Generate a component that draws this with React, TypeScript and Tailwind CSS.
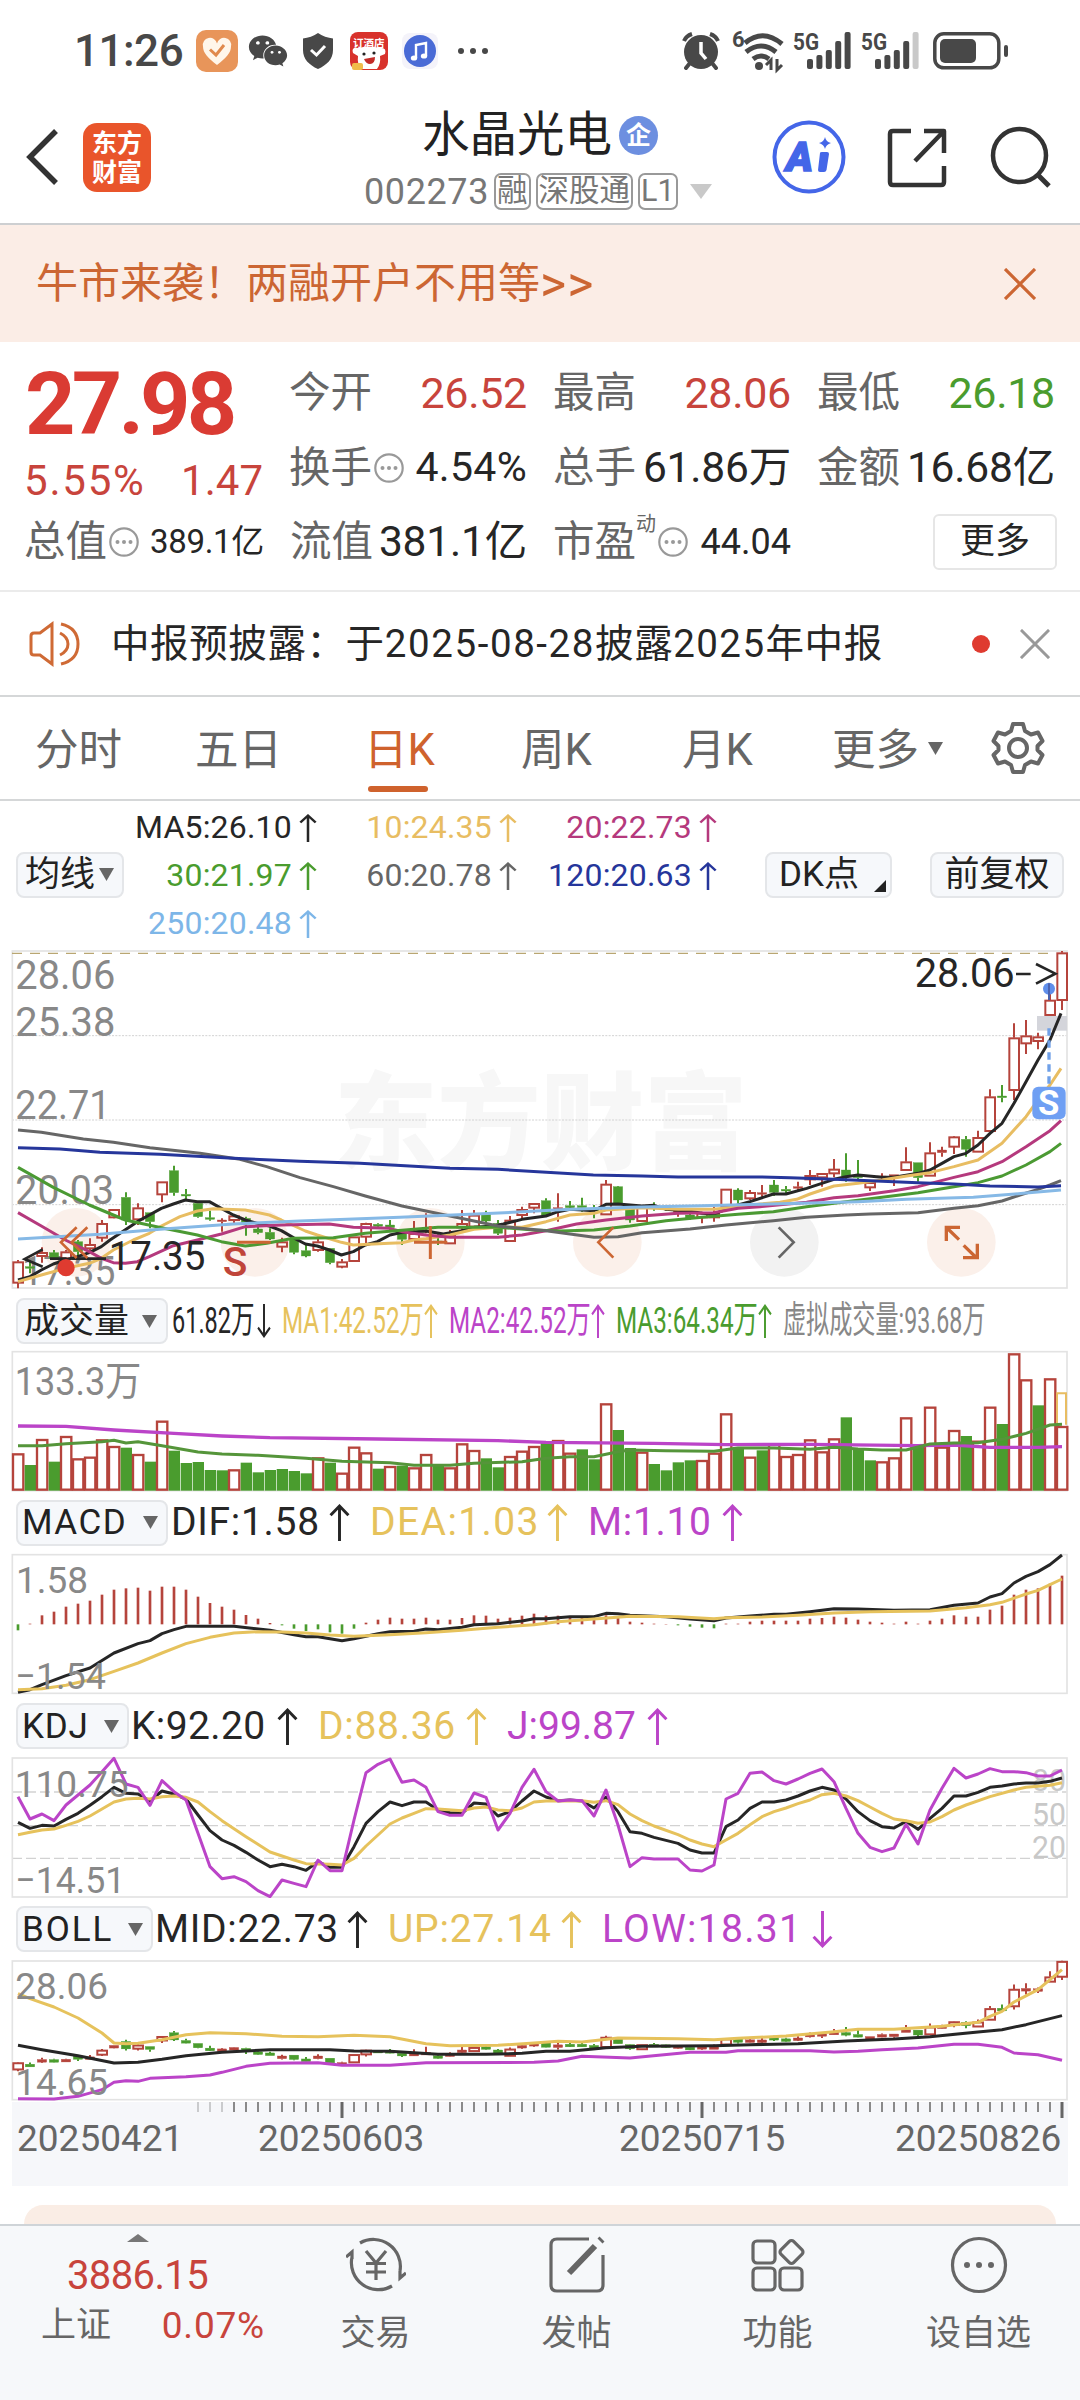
import React from "react";
import { FaWeixin } from "react-icons/fa";

type Pt = [number, number];

const RED = "#b5443c";
const GREEN = "#4a9c2e";
const DARK = "#262626";
const YELLOW = "#e6c25c";
const PURPLE = "#bb44c8";

// Charts are drawn on a 3240-unit wide canvas, one candle every 36 units
const STEP = 36;
const X0 = 54;
const cx = (i: number) => X0 + i * STEP;

const toPath = (pts: Pt[]) => pts.map((p) => p.join(",")).join(" ");
const byIndex = (pts: Pt[]) => pts.map(([i, y]) => `${cx(i)},${y}`).join(" ");

// [direction, body top, body bottom, high, low]
type Candle = ["r" | "g", number, number, number, number];
const candles: Candle[] = [
  ["r", 965, 1028, 960, 1045], ["g", 980, 984, 965, 1000], ["r", 937, 948, 922, 968], ["g", 938, 955, 930, 960],
  ["r", 935, 955, 930, 960], ["g", 905, 935, 900, 950], ["r", 913, 925, 895, 940], ["r", 850, 893, 840, 905],
  ["r", 808, 832, 808, 835], ["g", 772, 840, 757, 855], ["r", 803, 838, 790, 855], ["g", 818, 845, 818, 865],
  ["r", 725, 763, 725, 787], ["g", 692, 758, 677, 767], ["g", 763, 767, 747, 778], ["g", 790, 830, 790, 833],
  ["g", 833, 837, 812, 842], ["r", 840, 844, 835, 875], ["r", 827, 840, 825, 850], ["g", 835, 852, 830, 887],
  ["g", 867, 878, 860, 883], ["g", 877, 897, 865, 900], ["r", 905, 920, 893, 937], ["g", 897, 937, 897, 943],
  ["g", 932, 948, 915, 952], ["r", 905, 930, 890, 935], ["g", 925, 968, 925, 973], ["r", 965, 980, 957, 985],
  ["r", 890, 963, 890, 963], ["r", 850, 890, 848, 910], ["g", 853, 859, 850, 867], ["g", 855, 863, 840, 870],
  ["g", 880, 898, 880, 915], ["r", 880, 897, 843, 900], ["r", 871, 875, 820, 880], ["g", 903, 907, 880, 915],
  ["r", 885, 910, 870, 912], ["r", 850, 862, 810, 870], ["r", 825, 860, 810, 862], ["g", 820, 843, 812, 850],
  ["g", 850, 880, 840, 885], ["r", 840, 903, 828, 905], ["r", 808, 825, 800, 838], ["r", 790, 803, 790, 820],
  ["g", 782, 825, 775, 828], ["r", 803, 807, 760, 845], ["g", 797, 803, 783, 810], ["g", 797, 803, 773, 815],
  ["g", 808, 812, 795, 835], ["r", 732, 823, 720, 825], ["g", 740, 793, 738, 795], ["g", 800, 840, 798, 848],
  ["r", 800, 843, 800, 843], ["g", 798, 802, 787, 812], ["g", 803, 807, 800, 812], ["r", 812, 816, 805, 830],
  ["g", 825, 835, 822, 840], ["r", 818, 832, 815, 850], ["r", 820, 832, 800, 845], ["r", 747, 800, 747, 800],
  ["g", 750, 780, 745, 790], ["r", 757, 775, 750, 780], ["r", 758, 762, 735, 770], ["g", 735, 757, 720, 768],
  ["g", 748, 752, 738, 765], ["r", 740, 744, 725, 755], ["r", 706, 718, 690, 735], ["r", 700, 712, 700, 740],
  ["r", 687, 700, 657, 712], ["g", 690, 708, 640, 725], ["g", 708, 712, 660, 720], ["r", 727, 742, 727, 753],
  ["r", 708, 712, 700, 725], ["r", 704, 712, 704, 738], ["r", 665, 690, 622, 690], ["g", 668, 713, 668, 725],
  ["r", 638, 707, 607, 707], ["r", 630, 638, 620, 650], ["r", 590, 620, 588, 642], ["g", 598, 628, 588, 650],
  ["r", 592, 635, 572, 635], ["r", 470, 573, 448, 573], ["g", 468, 472, 435, 487], ["r", 293, 450, 250, 480],
  ["r", 287, 310, 240, 342], ["r", 290, 303, 278, 328], ["r", 180, 225, 130, 225], ["r", 38, 180, 33, 210],
];

const ma5: Pt[] = [[54,1020],[90,1010],[124,990],[160,972],[196,960],[232,950],[268,938],[304,920],[330,900],[375,870],[412,845],[448,825],[484,805],[520,792],[556,780],[592,785],[628,785],[664,805],[700,825],[736,840],[772,850],[808,858],[844,872],[880,893],[916,912],[952,918],[988,930],[1024,945],[1060,935],[1096,915],[1132,905],[1170,885],[1200,878],[1278,873],[1330,882],[1386,872],[1422,862],[1480,858],[1510,852],[1566,838],[1638,828],[1674,815],[1710,808],[1782,812],[1818,793],[1854,792],[1926,798],[1962,796],[1998,808],[2070,814],[2106,820],[2142,822],[2178,808],[2214,795],[2250,785],[2320,762],[2358,762],[2420,745],[2502,718],[2538,710],[2574,705],[2646,712],[2682,712],[2754,700],[2790,690],[2826,670],[2862,650],[2898,640],[2934,615],[2970,580],[3006,550],[3042,490],[3078,425],[3114,360],[3150,300],[3183,220]];
const ma10: Pt[] = [[54,1025],[124,1005],[196,985],[268,970],[304,955],[340,930],[400,900],[448,880],[484,858],[540,830],[592,813],[640,806],[736,810],[808,825],[844,840],[916,873],[952,885],[1024,907],[1060,915],[1168,910],[1206,908],[1242,900],[1278,896],[1350,885],[1422,868],[1494,862],[1566,862],[1638,845],[1710,825],[1782,820],[1818,810],[1926,803],[2034,808],[2142,808],[2214,800],[2280,792],[2340,787],[2390,778],[2430,762],[2502,738],[2574,730],[2646,720],[2720,708],[2790,698],[2862,680],[2934,660],[3006,610],[3078,530],[3114,480],[3150,435],[3183,385]];
const ma20: Pt[] = [[54,818],[124,858],[196,900],[268,935],[304,955],[340,968],[376,970],[412,965],[448,950],[520,917],[592,900],[664,882],[736,860],[844,855],[988,852],[1060,862],[1168,865],[1206,875],[1278,885],[1350,892],[1494,892],[1566,885],[1638,872],[1730,852],[1818,840],[1926,828],[2034,820],[2142,818],[2214,805],[2280,800],[2420,787],[2502,773],[2574,767],[2682,752],[2754,740],[2862,712],[2934,695],[3006,665],[3078,620],[3150,572],[3183,542]];
const ma30: Pt[] = [[54,682],[160,742],[268,795],[376,840],[484,863],[592,885],[664,905],[736,918],[800,910],[880,895],[1000,893],[1096,880],[1206,871],[1314,862],[1494,862],[1602,870],[1680,873],[1782,870],[1890,858],[1998,842],[2106,832],[2214,823],[2320,815],[2420,800],[2538,785],[2646,772],[2754,758],[2862,740],[2934,728],[3006,708],[3078,675],[3150,635],[3183,610]];
const ma60: Pt[] = [[54,570],[124,577],[250,597],[340,607],[450,623],[600,640],[720,658],[800,680],[900,713],[1000,740],[1096,768],[1206,798],[1350,828],[1494,858],[1638,872],[1782,892],[1854,890],[1926,878],[2070,867],[2178,855],[2320,842],[2420,832],[2538,825],[2610,822],[2754,818],[2862,805],[2934,797],[3006,783],[3060,765],[3114,748],[3150,735],[3183,722]];
const ma120: Pt[] = [[54,623],[180,627],[300,637],[480,643],[700,655],[900,664],[1080,670],[1350,685],[1494,688],[1780,705],[1926,708],[2034,711],[2280,711],[2370,713],[2502,718],[2610,722],[2754,728],[2862,732],[2970,738],[3114,741],[3183,737]];
const ma250: Pt[] = [[54,897],[300,883],[480,868],[700,852],[900,843],[1200,832],[1480,820],[1680,809],[1890,802],[2106,797],[2280,793],[2574,785],[2720,778],[2920,772],[3070,760],[3183,750]];

const volumes = [
  "r490","g525","r447","g515","r438","r505","r500","r448","r468","g473","r492","g515","r392","g482","g519","g516",
  "g540","g541","r538","g518","g547","g540","g537","g543","g550","r502","g518","r548","r470","r487","g536","r528",
  "g527","r532","r492","g527","r532","r460","r480","g505","g532","r498","r482","r468","g457","r450","r488","g478",
  "g508","r340","g420","g474","r485","g522","g541","g517","g511","r510","r488","r370","g472","r500","g481","r460",
  "r498","r492","r448","r484","r445","g382","g474","g511","r514","r502","r382","g468","r350","r470","r420","g438",
  "r452","r350","g402","r190","r268","g346","r265","r408",
];
const volSlow: Pt[] = [[0,408],[4,409],[8,420],[13,430],[17,438],[21,443],[30,447],[40,452],[44,457],[53,460],[59,464],[66,463],[75,467],[78,465],[81,472],[85,472],[87,470]];
const volFast: Pt[] = [[0,467],[2,467],[4,461],[7,455],[8,451],[9,459],[10,455],[12,467],[15,486],[17,492],[20,496],[24,505],[27,514],[31,518],[33,526],[36,526],[38,520],[42,515],[44,505],[46,500],[48,500],[50,485],[51,480],[54,482],[58,484],[60,474],[63,474],[66,478],[68,472],[70,477],[72,480],[74,480],[76,462],[78,459],[80,458],[82,448],[84,430],[86,405],[87,403]];

const macdBars = [
  422,402,377,366,351,342,333,315,300,296,294,303,291,291,300,321,340,351,360,376,387,400,407,417,424,419,428,432,417,399,
  390,384,387,387,384,390,390,385,377,378,387,384,378,372,378,378,381,381,390,377,384,396,399,402,403,407,411,414,416,402,
  402,396,393,393,393,393,387,385,381,384,390,396,399,402,396,402,393,387,377,381,381,360,348,315,300,296,282,258,
];
const dif: Pt[] = [[0,608],[1,600],[2,585],[4,558],[6,535],[8,490],[10,462],[11,453],[12,432],[13,420],[14,410],[18,410],[21,422],[23,435],[24,441],[25,441],[27,453],[28,447],[30,432],[31,426],[33,425],[34,418],[35,420],[37,413],[38,405],[40,402],[42,394],[43,387],[44,387],[46,381],[48,381],[49,371],[50,372],[51,377],[54,381],[56,388],[58,393],[59,385],[61,379],[63,374],[64,374],[66,366],[68,357],[70,358],[73,362],[76,360],[78,347],[80,340],[81,322],[82,312],[83,280],[84,260],[85,246],[86,225],[87,196]];
const dea: Pt[] = [[0,600],[2,597],[4,587],[6,570],[8,545],[10,520],[12,490],[14,462],[16,443],[18,430],[20,426],[22,427],[24,430],[26,436],[28,440],[31,435],[34,429],[37,422],[40,413],[43,405],[45,396],[48,388],[51,380],[55,381],[58,387],[59,384],[62,382],[65,377],[68,370],[71,366],[76,364],[79,354],[81,345],[82,338],[84,313],[85,302],[86,285],[87,268]];

const kLine: Pt[] = [[0,367],[1,385],[2,376],[3,378],[4,358],[5,340],[6,316],[7,290],[8,262],[9,280],[10,282],[11,303],[12,273],[13,282],[14,297],[15,345],[16,392],[17,420],[18,436],[19,457],[20,480],[21,500],[22,493],[23,500],[24,511],[25,485],[26,502],[27,502],[28,440],[29,370],[30,335],[31,306],[32,317],[33,306],[34,306],[35,330],[36,338],[37,340],[38,309],[39,312],[40,348],[41,335],[42,303],[43,273],[44,291],[45,302],[46,300],[47,303],[48,324],[49,291],[50,335],[51,395],[52,400],[53,412],[55,430],[56,450],[57,459],[58,459],[59,380],[60,360],[61,325],[62,306],[63,306],[64,300],[65,288],[66,273],[67,262],[68,270],[69,297],[70,335],[71,362],[72,380],[73,384],[74,364],[75,388],[76,355],[77,325],[78,288],[79,288],[80,277],[81,262],[82,258],[83,252],[84,249],[85,249],[86,244],[87,234]];
const dLine: Pt[] = [[0,404],[1,397],[2,390],[3,387],[4,376],[5,364],[6,348],[7,327],[8,306],[9,297],[10,295],[11,297],[12,290],[13,288],[14,292],[15,306],[16,335],[17,362],[19,410],[21,456],[22,468],[23,480],[24,491],[25,492],[26,493],[27,495],[28,475],[29,438],[30,405],[31,372],[32,354],[33,340],[34,326],[35,327],[37,332],[38,324],[39,321],[40,330],[41,332],[42,324],[43,306],[44,303],[47,302],[48,307],[49,302],[50,314],[51,342],[52,362],[53,378],[55,404],[56,420],[57,432],[58,440],[59,420],[60,400],[61,374],[62,350],[63,335],[64,324],[65,311],[66,300],[67,284],[68,280],[69,288],[70,302],[71,321],[72,340],[73,357],[74,362],[75,370],[76,366],[77,350],[78,330],[79,315],[81,290],[83,270],[84,262],[86,256],[87,248]];
const jLine: Pt[] = [[0,290],[1,357],[2,342],[3,362],[4,315],[5,285],[6,255],[7,215],[8,175],[9,252],[10,262],[11,316],[12,242],[13,275],[14,300],[15,400],[16,500],[17,536],[18,530],[19,545],[20,572],[21,590],[22,540],[23,550],[24,560],[25,480],[26,512],[27,512],[28,360],[29,218],[30,193],[31,177],[32,247],[33,240],[34,262],[35,335],[36,346],[37,346],[38,279],[39,292],[40,390],[41,340],[42,262],[43,208],[44,275],[45,303],[46,300],[47,302],[48,348],[49,270],[50,375],[51,500],[52,473],[53,477],[55,477],[56,510],[57,513],[58,495],[59,297],[60,280],[61,220],[62,216],[63,242],[64,252],[65,237],[66,220],[67,207],[68,245],[69,325],[70,400],[71,442],[72,455],[73,444],[74,373],[75,432],[76,330],[77,265],[78,205],[79,234],[80,222],[81,206],[82,215],[83,215],[84,218],[85,228],[86,228],[87,210]];

const bollUp: Pt[] = [[0,282],[1,297],[3,322],[5,355],[7,400],[8,430],[9,432],[10,431],[12,420],[14,405],[16,399],[19,402],[22,410],[25,411],[28,407],[31,411],[34,432],[36,438],[40,437],[43,430],[45,425],[47,427],[50,415],[55,417],[58,420],[60,416],[64,409],[68,396],[70,389],[73,389],[75,384],[77,380],[80,368],[81,350],[82,335],[83,307],[85,270],[86,240],[87,210]];
const bollMid: Pt[] = [[0,437],[2,450],[5,468],[8,490],[10,488],[12,479],[14,468],[17,458],[21,450],[26,450],[28,454],[31,455],[35,464],[39,464],[42,461],[44,455],[46,455],[49,444],[52,440],[58,438],[61,435],[65,432],[69,424],[73,418],[76,411],[80,397],[82,390],[84,375],[87,348]];
const bollLow: Pt[] = [[0,597],[3,598],[5,590],[7,570],[8,548],[9,543],[10,545],[11,536],[14,531],[16,526],[17,518],[19,500],[21,491],[25,489],[27,497],[31,497],[34,489],[43,488],[45,484],[47,470],[51,475],[56,458],[59,458],[60,453],[66,453],[68,457],[70,455],[72,450],[75,445],[78,434],[80,434],[82,443],[83,460],[85,465],[87,482]];

const Line = ({ pts, color, w = 9 }: { pts: string; color: string; w?: number }) => (
  <polyline points={pts} fill="none" stroke={color} strokeWidth={w} strokeLinejoin="round" />
);

const Label = ({ x, y, w, children, size = 122, fill = "#888" }: { x: number; y: number; w: number; children: string; size?: number; fill?: string }) => (
  <text x={x} y={y} fontSize={size} fill={fill} textLength={w} lengthAdjust="spacingAndGlyphs">
    {children}
  </text>
);

const Candles = ({ map = (y: number) => y, minBody = 5 }: { map?: (y: number) => number; minBody?: number }) => (
  <g>
    {candles.map(([dir, top, bottom, high, low], i) => {
      const color = dir === "r" ? RED : GREEN;
      const t = map(top);
      const h = Math.max(map(bottom) - t, minBody);
      const hollow = dir === "r" && h > 9;
      return (
        <g key={i} stroke={color}>
          <path d={`M${cx(i)} ${map(high)}V${t}M${cx(i)} ${t + h}V${map(low)}`} strokeWidth={6} />
          {hollow ? (
            <rect x={cx(i) - 14} y={t + 2} width={29} height={h - 2} fill="#fff" strokeWidth={6} />
          ) : (
            <rect x={cx(i) - 14} y={t} width={28} height={h} fill={color} strokeWidth={1} />
          )}
        </g>
      );
    })}
  </g>
);

const MainChart = () => (
  <svg viewBox="0 24 3240 1032" className="block h-[344px] w-[1080px] font-[Roboto,'Noto_Sans_CJK_SC',sans-serif]">
    <text x={1002} y={664} fontSize={316} fontWeight={900} fill="#f7f7f7" textLength={1240} lengthAdjust="spacingAndGlyphs">
      东方财富
    </text>
    {[287, 540, 794].map((y) => (
      <path key={y} d={`M36 ${y}H3200`} stroke="#d2d2d2" strokeWidth={3} strokeDasharray="6 4" />
    ))}
    <rect x={37} y={33} width={3164} height={1011} fill="none" stroke="#e3e3e3" strokeWidth={5} />
    <path d="M36 40H3150" stroke="#b9a672" strokeWidth={4} strokeDasharray="30 24" />
    {[228, 765, 1291, 1822, 2353, 2884].map((x) => (
      <circle key={x} cx={x} cy={907} r={103} fill={x === 2353 ? "#f2f2f2" : "#fbf0ea"} />
    ))}
    <Label x={46} y={147} w={300}>28.06</Label>
    <Label x={46} y={287} w={300}>25.38</Label>
    <Label x={46} y={538} w={286}>22.71</Label>
    <Label x={46} y={793} w={296}>20.03</Label>
    <Label x={66} y={1034} w={280}>17.35</Label>
    <rect x={3111} y={228} width={90} height={44} fill="#d4d5db" />
    <Candles />
    <Line pts={toPath(ma5)} color={DARK} />
    <Line pts={toPath(ma10)} color="#e8bd62" />
    <Line pts={toPath(ma20)} color="#b5397d" />
    <Line pts={toPath(ma30)} color="#4b9a33" />
    <Line pts={toPath(ma60)} color="#666" />
    <Line pts={toPath(ma120)} color="#26369b" />
    <Line pts={toPath(ma250)} color="#86b9e6" />

    {/* low and high price pointers */}
    <g fill="none" stroke={DARK} strokeWidth={8}>
      <path d="M128 928L74 957L128 980M150 956H200M214 956H318" />
      <path d="M3048 102H3092M3108 72L3166 101L3108 131" />
    </g>
    <Label x={326} y={991} w={290} size={120} fill={DARK}>17.35</Label>
    <Label x={2744} y={140} w={300} size={120} fill={DARK}>28.06</Label>
    <circle cx={198} cy={983} r={26} fill="#df3b30" />

    <circle cx={3147} cy={146} r={18} fill="#5f8eea" />
    <path d="M3147 130V180" stroke="#4a62b0" strokeWidth={6} />
    <path d="M3147 265V435" stroke="#6fa0e8" strokeWidth={10} strokeDasharray="22 14" />
    <rect x={3097} y={440} width={100} height={98} rx={18} fill="#6f9ff3" />
    <text x={3146} y={526} fontSize={104} fontWeight={700} fill="#fff" textAnchor="middle">S</text>

    <g fill="none" stroke="#cc6633" strokeWidth={8}>
      <path d="M230 862L183 907L230 954M262 862L215 907L262 954" />
      <path d="M1242 907H1342M1291 858V957" strokeWidth={9} />
      <path d="M1840 862L1795 907L1840 953" />
      <path d="M2839 903V862H2880M2841 864L2877 899M2891 916L2930 954M2932 911V953H2889" strokeWidth={10} />
      <path d="M711 907H812" strokeWidth={9} />
    </g>
    <path d="M2336 862L2381 907L2336 953" fill="none" stroke="#666" strokeWidth={8} />
    <text x={668} y={1008} fontSize={122} fontWeight={500} fill="#c0453a">S</text>
  </svg>
);

const Frame = ({ y, h }: { y: number; h: number }) => (
  <rect x={37} y={y} width={3164} height={h} fill="none" stroke="#e3e3e3" strokeWidth={5} />
);

const VolumeChart = () => (
  <svg viewBox="0 180 3240 426" className="block h-[142px] w-[1080px] font-[Roboto,'Noto_Sans_CJK_SC',sans-serif]">
    <Frame y={185} h={417} />
    <Label x={44} y={315} w={380} size={118}>133.3万</Label>
    {volumes.map((v, i) => {
      const top = Number(v.slice(1));
      return v[0] === "r" ? (
        <rect key={i} x={cx(i) - 15} y={top + 3} width={31} height={596 - top} fill="#fff" stroke={RED} strokeWidth={7} />
      ) : (
        <rect key={i} x={cx(i) - 16} y={top} width={34} height={602 - top} fill={GREEN} />
      );
    })}
    <path d="M3171 404V310H3198V404" fill="#fff" stroke="#e8bd62" strokeWidth={6} />
    <Line pts={byIndex(volSlow)} color={PURPLE} w={10} />
    <Line pts={byIndex(volFast)} color="#55953a" />
  </svg>
);

const MacdChart = () => (
  <svg viewBox="0 190 3240 426" className="block h-[142px] w-[1080px] font-[Roboto,sans-serif]">
    <Frame y={195} h={416} />
    {macdBars.map((v, i) => (
      <path key={i} d={`M${cx(i)} 404V${v}`} stroke={v > 404 ? GREEN : RED} strokeWidth={8} />
    ))}
    <Line pts={byIndex(dif)} color={DARK} />
    <Line pts={byIndex(dea)} color={YELLOW} />
    <Label x={48} y={310} w={216} size={112}>1.58</Label>
    <Label x={46} y={599} w={272} size={112}>−1.54</Label>
  </svg>
);

const KdjChart = () => (
  <svg viewBox="0 168 3240 426" className="block h-[142px] w-[1080px] font-[Roboto,sans-serif]">
    {[276, 377, 475].map((y) => (
      <path key={y} d={`M36 ${y}H3200`} stroke="#d2d2d2" strokeWidth={4} strokeDasharray="30 12" />
    ))}
    <Frame y={174} h={417} />
    <Label x={3096} y={273} w={102} size={92} fill="#c8c8c8">80</Label>
    <Label x={3096} y={375} w={102} size={92} fill="#c8c8c8">50</Label>
    <Label x={3096} y={475} w={102} size={92} fill="#c8c8c8">20</Label>
    <Line pts={byIndex(kLine)} color={DARK} />
    <Line pts={byIndex(dLine)} color={YELLOW} />
    <Line pts={byIndex(jLine)} color={PURPLE} />
    <Label x={44} y={290} w={342} size={112}>110.75</Label>
    <Label x={46} y={578} w={330} size={112}>−14.51</Label>
  </svg>
);

const BollChart = () => (
  <svg viewBox="0 178 3240 426" className="block h-[142px] w-[1080px] font-[Roboto,sans-serif]">
    <Frame y={184} h={416} />
    <Candles map={(y) => 183 + (y - 33) * 0.328} minBody={8} />
    <Line pts={byIndex(bollUp)} color={YELLOW} />
    <Line pts={byIndex(bollMid)} color={DARK} />
    <Line pts={byIndex(bollLow)} color={PURPLE} />
    <Label x={46} y={299} w={278} size={112}>28.06</Label>
    <Label x={46} y={586} w={278} size={112}>14.65</Label>
  </svg>
);

const Arrow = ({ down, className = "" }: { down?: boolean; className?: string }) => (
  <svg viewBox="0 0 20 36" preserveAspectRatio="none" className={`shrink-0 ${down ? "rotate-180" : ""} ${className}`}>
    <path d="M10 36V2M1.5 11L10 2L18.5 11" fill="none" stroke="currentColor" strokeWidth="2.8" />
  </svg>
);

const Caret = ({ className = "" }: { className?: string }) => (
  <svg viewBox="0 0 15 13" className={`h-[13px] w-[15px] shrink-0 ${className}`}>
    <path d="M0 0H15L7.5 13Z" fill="currentColor" />
  </svg>
);

const Info = () => (
  <svg viewBox="0 0 30 30" className="ml-[2px] h-[30px] w-[30px] shrink-0 text-[#999]">
    <circle cx="15" cy="15" r="13.7" fill="none" stroke="currentColor" strokeWidth="2.2" />
    {[8.5, 15, 21.5].map((x) => (
      <circle key={x} cx={x} cy="15" r="2" fill="currentColor" />
    ))}
  </svg>
);

const Chip = ({ children, className = "" }: { children: React.ReactNode; className?: string }) => (
  <div className={`flex h-[46px] shrink-0 items-center rounded-lg border-2 border-[#e4e6e9] bg-[#f6f8fb] text-[35px] leading-none text-[#222] ${className}`}>
    {children}
  </div>
);

const Bars = ({ last = "#484848" }: { last?: string }) => (
  <svg viewBox="0 0 60 40" className="h-10 w-[60px] overflow-visible">
    <text x="0" y="19" fontSize="24" fontWeight="700" fill="#484848" textLength="26" lengthAdjust="spacingAndGlyphs">5G</text>
    {[28, 24, 19, 10, 1].map((y, i) => (
      <rect key={y} x={14 + i * 9.4} y={y} width="6" height={38 - y} rx="2" fill={i === 4 ? last : "#484848"} />
    ))}
  </svg>
);

const StatusBar = () => (
  <div className="flex h-[102px] items-center pl-[74px] text-[#484848]">
    <span className="w-[122px] text-[44px] leading-none font-medium tracking-[-0.5px]">11:26</span>
    <svg viewBox="0 0 42 42" className="h-[42px] w-[42px]">
      <rect width="42" height="42" rx="10" fill="#e8955a" />
      <path d="M21 35C12 28 7 23 7 16.500a7 7 0 0 1 14-3a7 7 0 0 1 14 3C35 23 30 28 21 35Z" fill="#fff6ea" />
      <path d="M14 19.500L20 25L28 15" fill="none" stroke="#e0894c" strokeWidth="3" />
    </svg>
    <FaWeixin className="ml-[10px] h-[40px] w-[40px]" />
    <svg viewBox="0 0 32 36" className="ml-[14px] h-9 w-8">
      <path d="M16 0C20 3 26 5 31 5.500V17C31 26 25 32 16 36C7 32 1 26 1 17V5.500C6 5 12 3 16 0Z" fill="currentColor" />
      <path d="M9 17L14.500 22L23 13" fill="none" stroke="#fff" strokeWidth="3" />
    </svg>
    <svg viewBox="0 0 38 38" className="ml-[16px] h-[38px] w-[38px]">
      <rect width="38" height="38" rx="8" fill="#d8322c" />
      <text x="3" y="15" fontSize="10.500" fontWeight="700" fill="#fff">订酒店</text>
      <path d="M3 21Q1 15 8 16Q19 13 30 16Q37 15 35 22L30 24Q31 32 27 37H11Q7 32 8 24Z" fill="#fff" />
      <circle cx="14" cy="22" r="1.600" fill="#222" />
      <circle cx="24" cy="21" r="1.600" fill="#222" />
      <path d="M14 27L25 25Q25 32 20 32Q16 32 14 27Z" fill="#c32b28" />
      <rect x="2" y="31" width="11" height="7" rx="2" fill="#f0bc4a" />
    </svg>
    <svg viewBox="0 0 36 36" className="ml-[14px] h-9 w-9">
      <rect width="36" height="36" rx="8" fill="#f4f3fa" />
      <circle cx="18" cy="18" r="16" fill="#4a6bd6" />
      <path d="M14 25V12L24 10V23" fill="none" stroke="#fff" strokeWidth="2.400" />
      <ellipse cx="12" cy="25" rx="3.200" ry="2.600" fill="#fff" />
      <ellipse cx="22" cy="23" rx="3.200" ry="2.600" fill="#fff" />
    </svg>
    <div className="ml-[20px] flex gap-[6px]">
      <i className="h-[6px] w-[6px] rounded-full bg-[#484848]" />
      <i className="h-[6px] w-[6px] rounded-full bg-[#484848]" />
      <i className="h-[6px] w-[6px] rounded-full bg-[#484848]" />
    </div>

    <svg viewBox="0 0 38 38" className="ml-auto h-[38px] w-[38px]">
      <path d="M8 31L4 36M30 31L34 36" stroke="currentColor" strokeWidth="4" strokeLinecap="round" />
      <circle cx="19" cy="20" r="17" fill="currentColor" />
      <path d="M2 9Q4 4 10 2M36 9Q34 4 28 2" fill="none" stroke="currentColor" strokeWidth="4" />
      <path d="M19 10V21L24 27" fill="none" stroke="#fff" strokeWidth="3.500" />
    </svg>
    <svg viewBox="0 0 54 42" className="ml-[12px] h-[42px] w-[54px] overflow-visible">
      <text x="0" y="17" fontSize="22" fontWeight="700" fill="currentColor">6</text>
      <path d="M13 13Q31 -2 50 14M14 22Q29 10 44 22M21 29Q29 23 37 29" fill="none" stroke="currentColor" strokeWidth="5" />
      <circle cx="27" cy="36" r="4" fill="currentColor" />
      <path d="M39 40V30L34 35M45 29V40L50 35" fill="none" stroke="currentColor" strokeWidth="3" />
    </svg>
    <div className="ml-[7px]"><Bars /></div>
    <div className="ml-[8px]"><Bars last="#c9c9c9" /></div>
    <svg viewBox="0 0 76 38" className="mr-[71px] ml-[12px] h-[38px] w-[76px]">
      <rect x="1.800" y="1.800" width="64" height="34" rx="9" fill="none" stroke="currentColor" strokeWidth="3.500" />
      <rect x="7" y="7" width="36" height="24" rx="5" fill="currentColor" />
      <rect x="71" y="13" width="4" height="12" rx="2" fill="currentColor" />
    </svg>
  </div>
);

const Tag = ({ children }: { children: string }) => (
  <span className="flex h-[37px] shrink-0 items-center rounded-[7px] border-2 border-[#999] px-[1px] text-[30.500px] leading-none whitespace-nowrap text-[#777]">{children}</span>
);

const Header = () => (
  <div className="flex h-[123px] border-b-2 border-[#cdcfd1]">
    <div className="flex w-[364px] items-start pl-[26px]">
      <svg viewBox="0 0 34 58" className="mt-[26px] h-[58px] w-[34px]">
        <path d="M30 3L4 29L30 55" fill="none" stroke="#333" strokeWidth="5.500" />
      </svg>
      <div className="mt-[21px] ml-[23px] flex h-[69px] w-[68px] flex-col items-center justify-center rounded-[14px] bg-[#e9552b] text-[25px] leading-[29px] font-bold text-white">
        <span>东方</span>
        <span>财富</span>
      </div>
    </div>
    <div className="flex w-[350px] flex-col items-center">
      <div className="flex h-[67px] items-center gap-[7px] pl-[2px] text-[47.500px] leading-none text-[#222]">
        水晶光电
        <span className="flex h-[39px] w-[39px] items-center justify-center rounded-full bg-[#6d8fe0] text-[25px] font-bold text-white">企</span>
      </div>
      <div className="mt-[4px] flex h-[37px] w-full items-center gap-[5px]">
        <span className="text-[36px] leading-none tracking-[0.600px] text-[#777]">002273</span>
        <Tag>融</Tag>
        <Tag>深股通</Tag>
        <Tag>L1</Tag>
        <svg viewBox="0 0 22 15" className="ml-[7px] h-[15px] w-[22px]">
          <path d="M0 0H22L11 15Z" fill="#c9c9c9" />
        </svg>
      </div>
    </div>
    <svg viewBox="0 0 74 74" className="mt-[18px] ml-[58px] h-[74px] w-[74px]">
      <circle cx="37" cy="37" r="34.500" fill="none" stroke="#4466e8" strokeWidth="4" />
      <text x="14" y="51" fontSize="41" fontWeight="900" fontStyle="italic" fill="#4466e8" stroke="#4466e8" strokeWidth="1.500">A</text>
      <path d="M48 33Q48 32 50 32H55Q57 32 57 34L54.500 50Q54 52 52 52H48Q46 52 46 50Z" fill="#4466e8" />
      <path d="M53 17Q54 22 59 23Q54 24.500 53 29Q52 24.500 47 23Q52 22 53 17Z" fill="#4466e8" />
    </svg>
    <svg viewBox="0 0 60 60" className="mt-[26px] ml-[41px] h-[60px] w-[60px]">
      <path d="M24 3H6Q3 3 3 6V54Q3 57 6 57H54Q57 57 57 54V38M37 3H57V25M57 3L28 33" fill="none" stroke="#333" strokeWidth="4.500" strokeLinejoin="round" />
    </svg>
    <svg viewBox="0 0 62 62" className="mt-[24px] ml-[43px] h-[62px] w-[62px]">
      <circle cx="29.500" cy="29.500" r="26.500" fill="none" stroke="#333" strokeWidth="4.500" />
      <path d="M48 49L59 60" stroke="#333" strokeWidth="5" />
    </svg>
  </div>
);

const Close = ({ color, className = "" }: { color: string; className?: string }) => (
  <svg viewBox="0 0 32 32" className={className}>
    <path d="M1 1L31 31M31 1L1 31" stroke={color} strokeWidth="3.200" />
  </svg>
);

const Quote = () => (
  <div className="h-[250px] border-b-2 border-[#ebebeb] pl-[24px]">
    <div className="flex h-[143px]">
      <div className="w-[265px] pt-[18px]">
        <div className="pl-px text-[88px] leading-[88px] font-bold tracking-[-3.800px] text-[#da3b33]">27.98</div>
        <div className="mt-[8px] flex w-[239px] justify-between text-[42px] leading-[50px] text-[#c8443c]">
          <span className="tracking-[1.800px]">5.55%</span>
          <span>1.47</span>
        </div>
      </div>
      <div className="grid grid-cols-[238px_238px_238px] content-start gap-x-[26px] gap-y-[15px] pt-[21px] text-[41.500px] text-[#666]">
        <div className="flex h-[60px] items-center justify-between">今开<b className="text-[43px] font-normal tracking-[-0.300px] text-[#c8443c]">26.52</b></div>
        <div className="flex h-[60px] items-center justify-between">最高<b className="text-[43px] font-normal tracking-[-0.300px] text-[#c8443c]">28.06</b></div>
        <div className="flex h-[60px] items-center justify-between">最低<b className="text-[43px] font-normal tracking-[-0.300px] text-[#4a9c2e]">26.18</b></div>
        <div className="flex h-[60px] items-center">换手<Info /><b className="ml-auto text-[41px] font-normal tracking-[0.300px] text-[#262626]">4.54%</b></div>
        <div className="flex h-[60px] items-center justify-between">总手<b className="text-[42.500px] font-normal tracking-[-0.200px] text-[#262626]">61.86万</b></div>
        <div className="flex h-[60px] items-center justify-between">金额<b className="text-[42.500px] font-normal tracking-[-0.200px] text-[#262626]">16.68亿</b></div>
      </div>
    </div>
    <div className="mt-[27px] flex h-[60px] items-center text-[41.500px] text-[#666]">
      <div className="mr-[26px] flex w-[240px] items-center">总值<Info /><b className="ml-auto text-[33px] font-normal tracking-[-0.300px] text-[#262626]">389.1亿</b></div>
      <div className="mr-[26px] flex w-[237px] items-center justify-between">流值<b className="text-[42.500px] font-normal tracking-[-0.200px] text-[#262626]">381.1亿</b></div>
      <div className="flex w-[238px] items-center">市盈<span className="mb-[36px] text-[20px] leading-none">动</span><Info /><b className="ml-auto text-[36px] font-normal text-[#262626]">44.04</b></div>
      <div className="ml-[142px] flex h-[56px] w-[124px] items-center justify-center rounded-md border-2 border-[#e6e6e6] text-[35px] text-[#262626]">更多</div>
    </div>
  </div>
);

const News = () => (
  <div className="flex h-[105px] items-center border-b-2 border-[#d5d7d8] pl-[28px]">
    <svg viewBox="0 0 54 46" className="h-[46px] w-[54px]">
      <g fill="none" stroke="#cf6a35" strokeWidth="3">
        <path d="M24 3L12 12H6Q3 12 3 15V31Q3 34 6 34H12L24 43Z" />
        <path d="M32 12Q40 16 40 23Q40 30 32 34M33 3Q50 7 50 23Q50 39 33 43" />
      </g>
    </svg>
    <span className="ml-[29px] w-[861px] text-[38.500px] tracking-[0.600px] whitespace-nowrap text-[#262626]">
      中报预披露：于<span className="tracking-[1.600px]">2025-08-28</span>披露<span className="tracking-[1.400px]">2025</span>年中报
    </span>
    <span className="h-[18px] w-[18px] rounded-full bg-[#df3b30]" />
    <Close color="#999" className="ml-[30px] h-[30px] w-[30px]" />
  </div>
);

const Tabs = () => (
  <div className="flex h-[104px] items-start border-b-2 border-[#d5d7d8] pt-[23px] pl-[35px] text-[43.500px] leading-[62px] text-[#666]">
    <span className="w-[160px]">分时</span>
    <span className="w-[169px]">五日</span>
    <div className="w-[157px] text-[#cf622d]">
      日K
      <div className="mt-[4px] ml-[4px] h-[6px] w-[60px] rounded-full bg-[#cf622d]" />
    </div>
    <span className="w-[161px]">周K</span>
    <span className="w-[150px]">月K</span>
    <span className="w-[96px]">更多</span>
    <Caret className="mt-[22px]" />
    <svg viewBox="0 0 54 54" className="mt-[1px] ml-[48px] h-[54px] w-[54px]">
      <g fill="none" stroke="#666" strokeWidth="4" strokeLinejoin="round">
        <path d="M22 3H32L34 10L40 13.500L47 11.500L51.500 20L46.500 25V29L51.500 34L47 42.500L40 40.500L34 44L32 51H22L20 44L14 40.500L7 42.500L2.500 34L7.500 29V25L2.500 20L7 11.500L14 13.500L20 10Z" />
        <circle cx="27" cy="27" r="9" />
      </g>
    </svg>
  </div>
);

const averages = [
  { text: "MA5:26.10", color: "text-[#262626]" },
  { text: "10:24.35", color: "text-[#e8bd62]" },
  { text: "20:22.73", color: "text-[#b5397d]" },
  { text: "30:21.97", color: "text-[#4a9c2e]" },
  { text: "60:20.78", color: "text-[#666]" },
  { text: "120:20.63", color: "text-[#26369b]" },
  { text: "250:20.48", color: "text-[#7db6e8]" },
];

const Averages = () => (
  <div className="flex h-[147px] items-center pl-[16px]">
    <Chip className="w-[108px] gap-[4px] pl-[7px]">均线<Caret className="text-[#666]" /></Chip>
    <div className="grid grid-cols-[193px_200px_200px] text-[32px] leading-[48px] tracking-[0.200px]">
      {averages.map((a) => (
        <div key={a.text} className={`flex items-center justify-end gap-[7px] ${a.color}`}>
          {a.text}
          <Arrow className="mt-[2px] h-[28px] w-[18px]" />
        </div>
      ))}
    </div>
    <Chip className="relative ml-[48px] w-[127px] pl-[12px]">
      DK点
      <svg viewBox="0 0 12 12" className="absolute right-[4px] bottom-[4px] h-3 w-3">
        <path d="M12 0V12H0Z" fill="#222" />
      </svg>
    </Chip>
    <Chip className="ml-[38px] w-[134px] justify-center">前复权</Chip>
  </div>
);

// Volume header packs five values in one row, so its glyphs are squeezed
const volumeItems = [
  { text: "61.82万", box: "w-[83px]", squeeze: "scale-x-[0.635]", color: "text-[#262626]", down: true },
  { text: "MA1:42.52万", box: "w-[140px]", squeeze: "scale-x-[0.655]", color: "text-[#e6c25c]" },
  { text: "MA2:42.52万", box: "w-[140px]", squeeze: "scale-x-[0.655]", color: "text-[#bb44c8]" },
  { text: "MA3:64.34万", box: "w-[140px]", squeeze: "scale-x-[0.655]", color: "text-[#4a9c2e]" },
];

const VolumeHeader = () => (
  <div className="flex h-[58px] items-center pl-[16px]">
    <Chip className="w-[152px] pl-[6px]">成交量<Caret className="ml-[13px] text-[#666]" /></Chip>
    <div className="ml-[4px] flex items-center gap-[11px] text-[37px] whitespace-nowrap">
      {volumeItems.map((v) => (
        <div key={v.text} className={`flex items-center gap-[2px] ${v.color}`}>
          <span className={v.box}><span className={`inline-block origin-left ${v.squeeze}`}>{v.text}</span></span>
          <Arrow down={v.down} className="h-[34px] w-[14px]" />
        </div>
      ))}
      <span className="w-[200px] text-[#888]"><span className="inline-block origin-left scale-x-[0.625]">虚拟成交量:93.68万</span></span>
    </div>
  </div>
);

type Item = { text: string; w: string; color: string; down?: boolean };

const IndicatorHeader = ({ name, chip, className, items }: { name: string; chip: string; className: string; items: Item[] }) => (
  <div className={`flex items-center pl-[16px] ${className}`}>
    <Chip className={`mr-[2px] justify-between pr-[8px] pl-[4px] ${chip}`}><span>{name}</span><Caret className="text-[#666]" /></Chip>
    {items.map((it) => (
      <div key={it.text} className={`mr-[20px] flex items-center justify-between text-[39px] leading-none whitespace-nowrap ${it.w} ${it.color}`}>
        {it.text}
        <Arrow down={it.down} className="h-[37px] w-[21px]" />
      </div>
    ))}
  </div>
);

const TimeAxis = () => (
  <div className="mx-[12px] mt-px h-[84px] bg-[#f6f7fa] text-[#666]">
    <svg viewBox="12 0 1056 18" className="block h-[18px] w-[1056px]">
      {Array.from({ length: 73 }, (_, k) => {
        const i = k + 15;
        const major = i % 30 === 27;
        return (
          <rect key={i} x={18 + i * 12 - (major ? 1.500 : 1)} y="0" width={major ? 3 : 2} height={major ? 16 : 10} fill={major ? "#666" : "#8a8a8a"} opacity={i < 18 ? 0.400 : 1} />
        );
      })}
    </svg>
    <div className="flex pl-[5px] text-[37px] leading-[38px]">
      <span className="w-[241px]">20250421</span>
      <span className="w-[361px]">20250603</span>
      <span className="w-[276px]">20250715</span>
      <span>20250826</span>
    </div>
  </div>
);

const NavItem = ({ label, children }: { label: string; children: React.ReactNode }) => (
  <div className="flex w-[201px] flex-col items-center pt-[9px] text-[35px] text-[#666]">
    <svg viewBox="0 0 60 60" className="h-[60px] w-[60px]" fill="none" stroke="currentColor" strokeWidth="3.2">
      {children}
    </svg>
    <span className="mt-[14px] leading-[50px]">{label}</span>
  </div>
);

const BottomNav = () => (
  <div className="flex h-[176px] border-t-2 border-[#cfd4d8] bg-[#f6f8fa]">
    <div className="flex w-[275px] flex-col items-center pt-[8px]">
      <svg viewBox="0 0 22 8" className="h-2 w-[22px]">
        <path d="M11 0L22 8H0Z" fill="#777" />
      </svg>
      <span className="mt-[10px] text-[40px] leading-[48px] tracking-[-0.600px] text-[#c8443c]">3886.15</span>
      <div className="mt-[1px] ml-[31px] flex w-[224px] items-center justify-between text-[35px] leading-[50px] text-[#666]">
        上证<span className="text-[37px] tracking-[0.800px] text-[#c8443c]">0.07%</span>
      </div>
    </div>
    <NavItem label="交易">
      <path d="M14 8A27 27 0 0 1 54 36M46 51A27 27 0 0 1 6 22M0 22L6 17V24M60 38L54 43V36" />
      <path d="M20 16L30 28L40 16M30 28V45M20 28.500H40M20 37H40" />
    </NavItem>
    <NavItem label="发帖">
      <path d="M42 4H10Q4 4 4 10V50Q4 56 10 56H50Q56 56 56 50V20" />
      <path d="M48 11L24 36L22 38" strokeWidth="6" />
      <path d="M53 6L55 4" strokeWidth="7" />
    </NavItem>
    <NavItem label="功能">
      <rect x="5" y="6" width="22" height="22" rx="4" />
      <rect x="5" y="33" width="22" height="22" rx="4" />
      <rect x="32" y="33" width="22" height="22" rx="4" />
      <rect x="34.500" y="8" width="18" height="18" rx="3" transform="rotate(45 43.500 17)" />
    </NavItem>
    <NavItem label="设自选">
      <circle cx="30" cy="30" r="26.500" />
      <g fill="currentColor" stroke="none">
        <circle cx="18" cy="30" r="3" />
        <circle cx="30" cy="30" r="3" />
        <circle cx="42" cy="30" r="3" />
      </g>
    </NavItem>
  </div>
);

export default function App() {
  return (
    <div className="h-[2400px] w-[1080px] overflow-hidden bg-white font-[Roboto,'Noto_Sans_CJK_SC',sans-serif]">
      <StatusBar />
      <Header />
      <div className="flex h-[117px] items-center bg-[#fbede6] pl-[36px] text-[42px] text-[#cc6633]">
        <span className="flex w-[968px] items-center leading-none">牛市来袭！两融开户不用等<span className="text-[50px] tracking-[1px]">&gt;&gt;</span></span>
        <Close color="#cc6633" className="h-8 w-8" />
      </div>
      <Quote />
      <News />
      <Tabs />
      <Averages />
      <MainChart />
      <VolumeHeader />
      <VolumeChart />
      <IndicatorHeader
        name="MACD"
        chip="w-[152px] tracking-[1.500px]"
        className="h-[61px]"
        items={[
          { text: "DIF:1.58", w: "ml-px w-[179px] tracking-[0.700px]", color: "text-[#262626]" },
          { text: "DEA:1.03", w: "w-[198px] tracking-[1.400px]", color: "text-[#e6c25c]" },
          { text: "M:1.10", w: "w-[155px] tracking-[0.700px]", color: "text-[#bb44c8]" },
        ]}
      />
      <MacdChart />
      <IndicatorHeader
        name="KDJ"
        chip="w-[113px] tracking-[0.800px]"
        className="h-[61px] pt-[1px]"
        items={[
          { text: "K:92.20", w: "w-[167px] tracking-[0.400px]", color: "text-[#262626]" },
          { text: "D:88.36", w: "w-[169px] tracking-[0.700px]", color: "text-[#e6c25c]" },
          { text: "J:99.87", w: "w-[161px]", color: "text-[#bb44c8]" },
        ]}
      />
      <KdjChart />
      <IndicatorHeader
        name="BOLL"
        chip="w-[137px] tracking-[1.900px]"
        className="h-[61px] pt-[1px]"
        items={[
          { text: "MID:22.73", w: "w-[213px] tracking-[0.700px]", color: "text-[#262626]" },
          { text: "UP:27.14", w: "w-[194px] tracking-[0.800px]", color: "text-[#e6c25c]" },
          { text: "LOW:18.31", w: "w-[231px] tracking-[1.300px]", color: "text-[#bb44c8]", down: true },
        ]}
      />
      <BollChart />
      <TimeAxis />
      <div className="mx-[24px] mt-[19px] h-[19px] rounded-t-[34px] bg-[#faede5]" />
      <BottomNav />
    </div>
  );
}
